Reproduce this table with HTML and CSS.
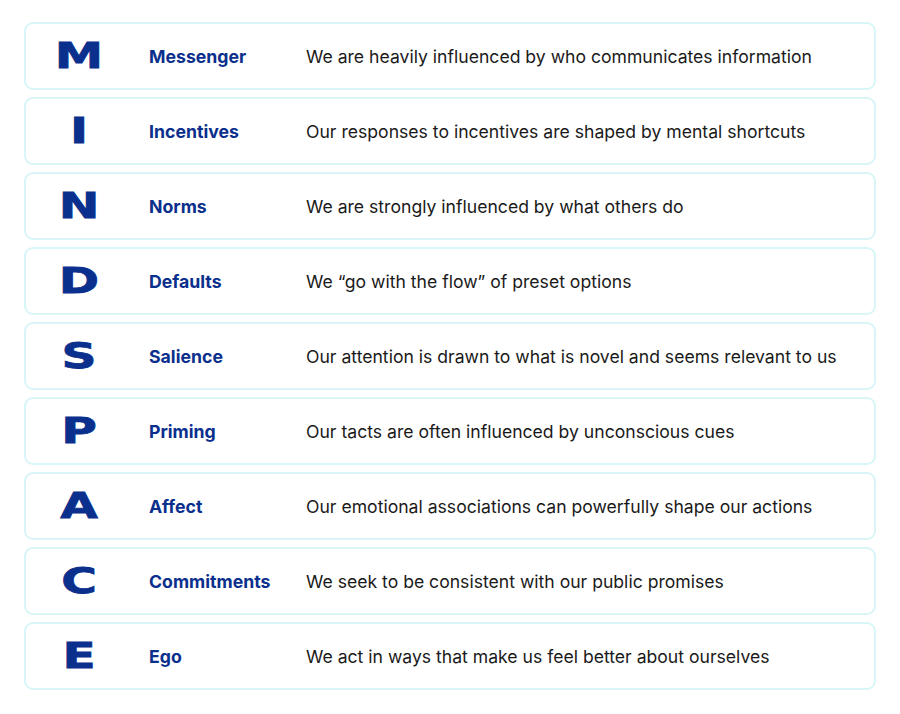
FILE: index.html
```html
<!DOCTYPE html>
<html>
<head>
<meta charset="utf-8">
<link rel="stylesheet" href="styles.css">
</head>
<body>
<div class="list">
  <div class="card"><span class="letter">M</span><span class="label">Messenger</span><span class="desc">We are heavily influenced by who communicates information</span></div>
  <div class="card"><span class="letter">I</span><span class="label">Incentives</span><span class="desc">Our responses to incentives are shaped by mental shortcuts</span></div>
  <div class="card"><span class="letter">N</span><span class="label">Norms</span><span class="desc">We are strongly influenced by what others do</span></div>
  <div class="card"><span class="letter">D</span><span class="label">Defaults</span><span class="desc">We “go with the flow” of preset options</span></div>
  <div class="card"><span class="letter">S</span><span class="label">Salience</span><span class="desc">Our attention is drawn to what is novel and seems relevant to us</span></div>
  <div class="card"><span class="letter">P</span><span class="label">Priming</span><span class="desc">Our tacts are often influenced by unconscious cues</span></div>
  <div class="card"><span class="letter">A</span><span class="label">Affect</span><span class="desc">Our emotional associations can powerfully shape our actions</span></div>
  <div class="card"><span class="letter">C</span><span class="label">Commitments</span><span class="desc">We seek to be consistent with our public promises</span></div>
  <div class="card"><span class="letter">E</span><span class="label">Ego</span><span class="desc">We act in ways that make us feel better about ourselves</span></div>
</div>
</body>
</html>
```
FILE: styles.css
```css
html, body {
  margin: 0;
  padding: 0;
  background: #ffffff;
}
.list {
  padding: 22px 24px 0 24px;
  display: flex;
  flex-direction: column;
  gap: 7px;
}
.card {
  height: 64px;
  border: 2px solid #d8f6f8;
  border-radius: 9px;
  display: grid;
  grid-template-columns: 106px 157px 1fr;
  align-items: center;
}
.letter {
  text-align: center;
  font-family: "DejaVu Sans", sans-serif;
  font-weight: 700;
  font-size: 36px;
  line-height: 1;
  color: #0a2f8c;
  transform: scaleX(1.35);
  -webkit-text-stroke: 0.8px #0a2f8c;
}
.label {
  padding-left: 17px;
  font-family: "Inter", sans-serif;
  font-weight: 700;
  font-size: 17.7px;
  color: #0a2f8c;
}
.desc {
  padding-left: 17px;
  font-family: "Inter", sans-serif;
  font-size: 17.6px;
  color: #1a1a1a;
}
```
